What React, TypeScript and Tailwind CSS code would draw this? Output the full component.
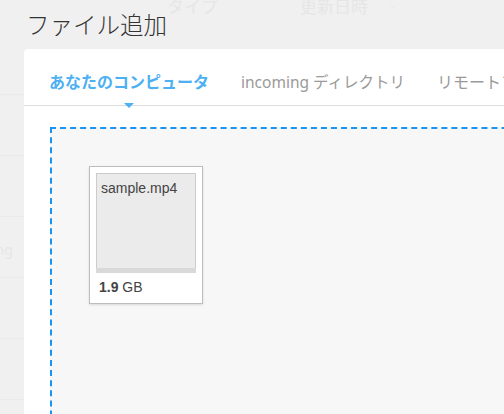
import { ChevronDown } from "lucide-react";

const jp = { fontFamily: '"Noto Sans", "Noto Sans CJK JP", sans-serif' };
const arial = { fontFamily: '"Liberation Sans", Arial, sans-serif' };

function BackgroundPage() {
  // faint page lying under the dialog overlay
  return (
    <div className="absolute inset-0 text-[#e6e6e6]" style={jp}>
      <div className="flex h-[15px] items-end text-[17px] leading-none">
        <span className="ml-[167px]">タイプ</span>
        <span className="ml-[82px]">更新日時</span>
        <ChevronDown className="ml-[20px] mb-[3px] h-[11px] w-[11px]" strokeWidth={2} />
      </div>
      <div className="mt-[79px] w-[24px]">
        {[0, 1, 2, 3, 4, 5].map((i) => (
          <div key={i} className="h-[61px] border-t border-[#eaeaea] text-[14px]">
            {i === 2 && <div className="mt-[22px] -ml-[8px]">ing</div>}
          </div>
        ))}
      </div>
    </div>
  );
}

function FileCard() {
  return (
    <div className="w-[114px] border border-[#bdbdbd] bg-white p-[6px] pb-[8px] shadow-[0_1px_2px_rgba(0,0,0,0.12)]">
      <div className="h-[100px] border-b-[5px] border-[#d9d9d9] bg-[#ebebeb]">
        <div className="h-[95px] border border-b-0 border-[#cccccc] px-[4px] pt-[6px] text-[14px] leading-[16px] text-[#444]" style={arial}>
          sample.mp4
        </div>
      </div>
      <div className="mt-[7px] pl-[3px] text-[14px] leading-[15px] text-[#444]" style={arial}>
        <span className="font-bold">1.9</span> GB
      </div>
    </div>
  );
}

export default function App() {
  return (
    <div className="relative h-[414px] w-[504px] overflow-hidden bg-[#f0f0f0]">
      <BackgroundPage />

      <div className="absolute inset-0 pl-[24px]" style={jp}>
        <h1 className="mt-[9px] pl-[2px] text-[23.5px] font-light leading-[32px] text-[#333]">
          ファイル追加
        </h1>

        <div className="mt-[8px] h-[400px] w-[640px] rounded-tl-[4px] bg-white">
          <div className="flex h-[57px] items-end gap-[32px] border-b border-[#dddddd] pl-[25px] pb-[13px] whitespace-nowrap text-[16px] leading-[20px]">
            <div className="relative font-bold text-[#4cb0f2]">
              あなたのコンピュータ
              <span className="absolute left-1/2 top-[31px] h-0 w-0 -translate-x-1/2 border-x-[5px] border-t-[5px] border-x-transparent border-t-[#4cb0f2]" />
            </div>
            <div className="text-[15.5px] text-[#9a9a9a]">incoming ディレクトリ</div>
            <div className="text-[#9a9a9a]">リモートファイル</div>
          </div>

          <div className="pl-[26px] pr-[26px] pt-[21px]">
            <div className="h-[320px] border-2 border-dashed border-[#1a94f2] bg-[#f7f7f7] pl-[37px] pt-[37px]">
              <FileCard />
            </div>
          </div>
        </div>
      </div>
    </div>
  );
}
